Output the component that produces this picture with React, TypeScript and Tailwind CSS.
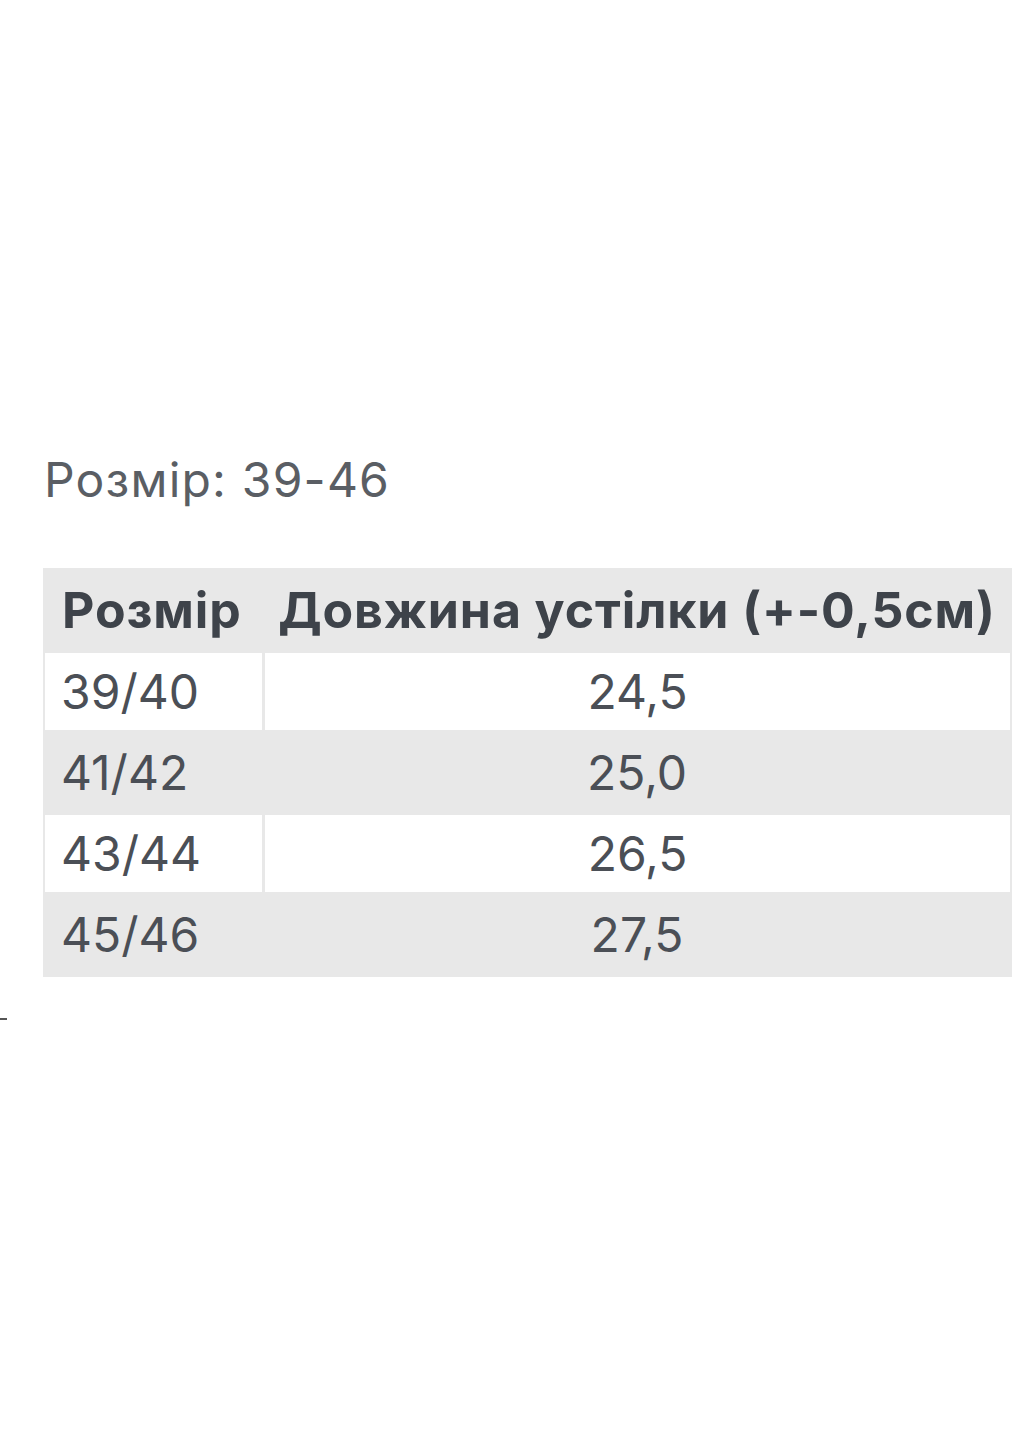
import React from "react";

const rows = [
  { size: "39/40", len: "24,5", white: true },
  { size: "41/42", len: "25,0", white: false },
  { size: "43/44", len: "26,5", white: true },
  { size: "45/46", len: "27,5", white: false },
];

export default function App() {
  return (
    <div className="relative w-[1035px] h-[1440px] bg-white font-['Inter',sans-serif] text-[#4b4f56]">
      <div className="pt-[452px] pl-[44px]">
        <div className="text-[48px] leading-[56px] tracking-[1.2px] text-[#5a5e64]">Розмір: 39-46</div>
      </div>
      <div className="ml-[43px] mt-[60px] w-[969px] bg-[#e8e8e8]">
        <div className="flex h-[85px] items-center font-bold text-[50px] tracking-[0.9px] text-[#3e434a]">
          <div className="w-[219px] pl-[19px]">Розмір</div>
          <div className="flex-1 text-center whitespace-nowrap">Довжина устілки (+-0,5см)</div>
        </div>
        {rows.map((r) =>
          r.white ? (
            <div key={r.size} className="flex h-[78px] gap-[3px] px-[2px] pb-[1px] text-[48px]">
              <div className="w-[217px] bg-white flex items-center pl-[16px]">{r.size}</div>
              <div className="flex-1 bg-white flex items-center justify-center">{r.len}</div>
            </div>
          ) : (
            <div key={r.size} className="flex h-[84px] items-center text-[48px]">
              <div className="w-[219px] pl-[18px]">{r.size}</div>
              <div className="flex-1 text-center">{r.len}</div>
            </div>
          )
        )}
      </div>
      <div className="absolute left-0 top-[1018px] w-[7px] h-[2px] bg-[#555]" />
    </div>
  );
}
